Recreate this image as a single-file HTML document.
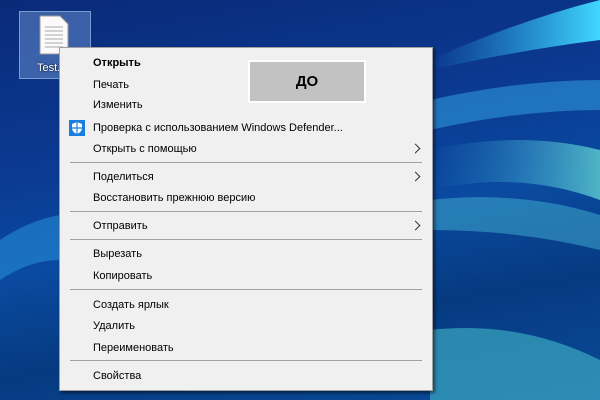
<!DOCTYPE html>
<html><head><meta charset="utf-8"><style>
*{margin:0;padding:0}
body{width:600px;height:400px;overflow:hidden;position:relative;font-family:"Liberation Sans","DejaVu Sans",sans-serif;
background:linear-gradient(170deg,#0a2a78 0%,#0b3a92 35%,#0a4aa0 55%,#063a80 75%,#0a4c9a 100%)}
.bg{position:absolute;inset:0}
.sel{position:absolute;left:19px;top:11px;width:70px;height:66px;background:rgba(120,160,220,.45);border:1px solid rgba(160,200,240,.6)}
.menu{position:absolute;left:59px;top:47px;width:372px;height:342px;background:#f0f0f0;border:1px solid #a0a0a0;box-shadow:2px 2px 3px rgba(0,0,0,.5)}
.it{position:absolute;left:33px;font-size:11px;color:#000;line-height:14px}
.sep{position:absolute;left:10px;width:352px;height:1px;background:#a0a0a0}
.ar{position:absolute;left:352px;width:6px;height:6px;border-right:1px solid #333;border-top:1px solid #333;transform:rotate(45deg)}
.do{position:absolute;left:188px;top:12px;width:114px;height:39px;background:#c2c2c2;border:2px solid #fff;font-weight:bold;font-size:15px;text-align:center;line-height:39px}
</style></head><body>
<svg class="bg" width="600" height="400">
<defs><linearGradient id="g1" x1="0" y1="0" x2="1" y2="0"><stop offset="0" stop-color="#2ab0f0" stop-opacity="0"/><stop offset="1" stop-color="#40d8ff"/></linearGradient>
<linearGradient id="g2" x1="0" y1="0" x2="1" y2="0"><stop offset="0" stop-color="#2a90d0" stop-opacity="0"/><stop offset="1" stop-color="#60d0d0"/></linearGradient></defs>
<path d="M430 60 Q520 20 600 0 L600 40 Q520 50 430 70Z" fill="url(#g1)"/>
<path d="M430 100 Q520 80 600 80 L600 110 Q520 110 430 130Z" fill="#2a8ad0" opacity=".7"/>
<path d="M430 150 Q520 130 600 150 L600 200 Q520 170 430 190Z" fill="url(#g2)" opacity=".8"/>
<path d="M430 200 Q520 190 600 215 L600 250 Q520 230 430 230Z" fill="#3aa0c8" opacity=".6"/>
<path d="M430 330 Q520 320 600 360 L600 400 L430 400Z" fill="#3aa8c0" opacity=".7"/>
<path d="M0 240 Q30 220 60 215 L60 260 Q30 260 0 280Z" fill="#2a9ae0" opacity=".5"/>
</svg>
<div class="sel"></div>
<svg style="position:absolute;left:38px;top:15px" width="32" height="40"><path d="M2 1H22L30 9V39H2Z" fill="#fafafa" stroke="#999"/><path d="M7 12H25M7 16H25M7 20H25M7 24H25M7 28H25M7 32H25" stroke="#aaa"/></svg>
<div style="position:absolute;left:37px;top:62px;color:#fff;font-size:11px;text-shadow:0 0 2px #000">Test.</div>
<div class="menu">
<div class="do">ДО</div>
<div class="it" style="top:8px;font-weight:bold">Открыть</div>
<div class="it" style="top:30px">Печать</div>
<div class="it" style="top:50px">Изменить</div>
<svg style="position:absolute;left:9px;top:72px" width="16" height="16"><rect width="16" height="16" fill="#1a7ee0"/><path d="M8 2 L13 4 V8 Q13 12 8 14 Q3 12 3 8 V4Z" fill="#fff"/><path d="M8 2V14M3 8H13" stroke="#1a7ee0" stroke-width="1.2"/></svg>
<div class="it" style="top:73px">Проверка с использованием Windows Defender...</div>
<div class="it" style="top:94px">Открыть с помощью</div><div class="ar" style="top:97px"></div>
<div class="sep" style="top:114px"></div>
<div class="it" style="top:122px">Поделиться</div><div class="ar" style="top:125px"></div>
<div class="it" style="top:143px">Восстановить прежнюю версию</div>
<div class="sep" style="top:163px"></div>
<div class="it" style="top:171px">Отправить</div><div class="ar" style="top:174px"></div>
<div class="sep" style="top:191px"></div>
<div class="it" style="top:199px">Вырезать</div>
<div class="it" style="top:221px">Копировать</div>
<div class="sep" style="top:241px"></div>
<div class="it" style="top:250px">Создать ярлык</div>
<div class="it" style="top:271px">Удалить</div>
<div class="it" style="top:293px">Переименовать</div>
<div class="sep" style="top:312px"></div>
<div class="it" style="top:321px">Свойства</div>
</div>
</body></html>
